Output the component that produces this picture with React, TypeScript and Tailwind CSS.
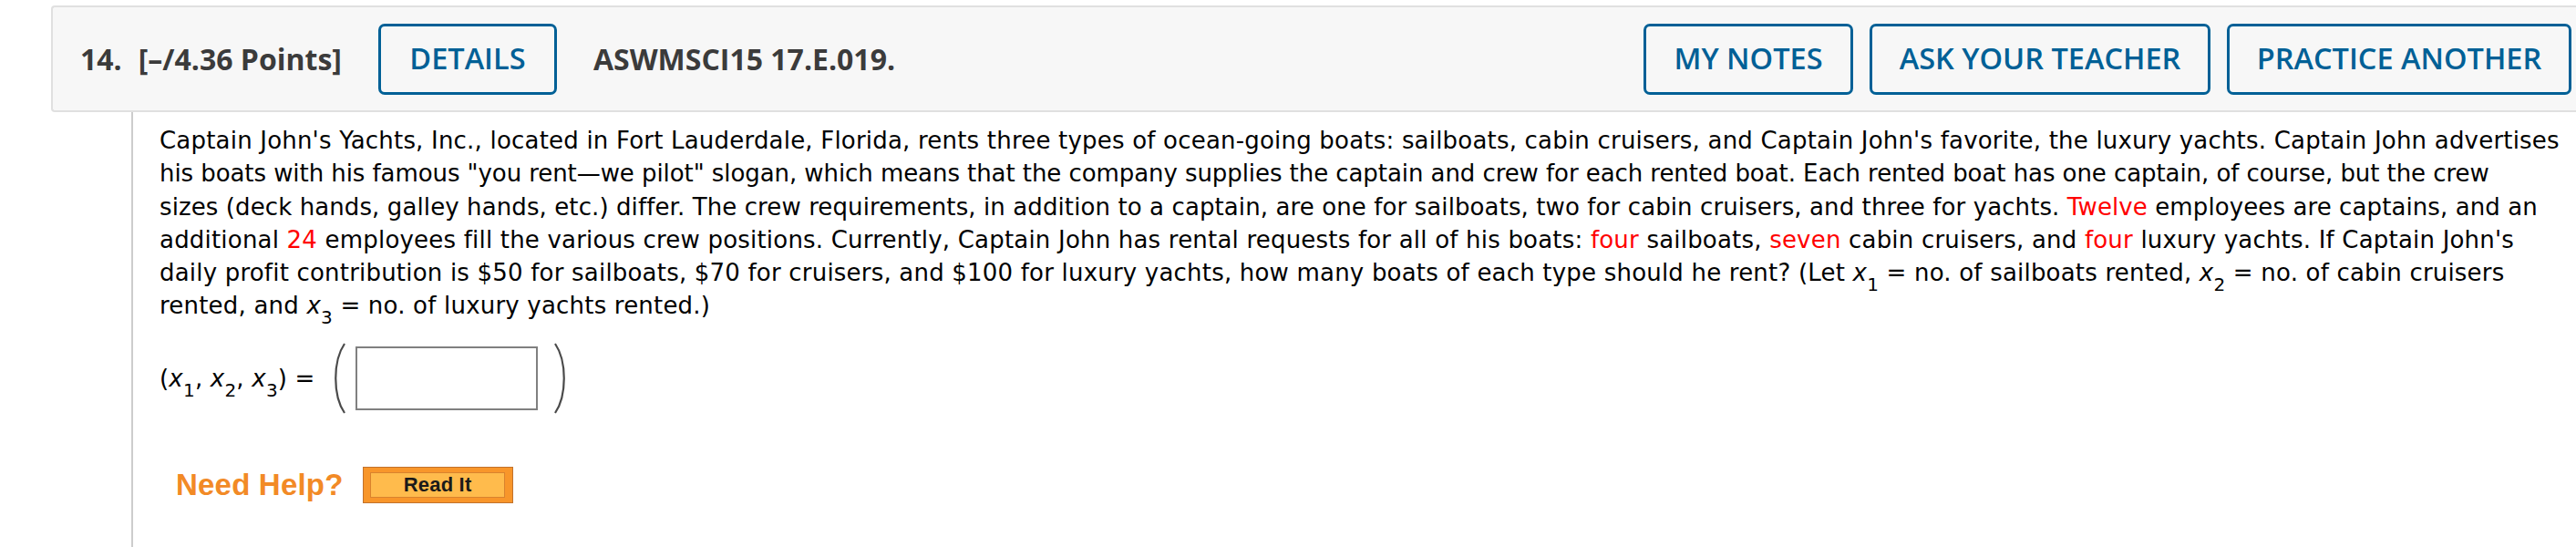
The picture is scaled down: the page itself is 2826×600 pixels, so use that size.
import React from "react";

const Sub = ({ n }: { n: string }) => (
  <span className="text-[20px] leading-[0] align-[-11px]">{n}</span>
);
const X = ({ n }: { n: string }) => (
  <>
    <i>x</i>
    <Sub n={n} />
  </>
);
const R = ({ children }: { children: React.ReactNode }) => (
  <span className="text-[#ff0000]">{children}</span>
);

function HeaderButton({ label, w }: { label: string; w: string }) {
  return (
    <div
      className={`${w} h-[78px] flex items-center justify-center border-[3px] border-[#006096] rounded-[7px] text-[#006096] font-semibold`}
    >
      {label}
    </div>
  );
}

export default function App() {
  return (
    <div className="w-[2826px] h-[600px] bg-white overflow-hidden">
      <div className="pl-[56px] pt-[6px]">
        <div className="h-[117px] flex items-center border-2 border-r-0 border-[#e0e0e0] rounded-l-[4px] bg-[#f7f7f7] pl-[30px] pr-[5px] font-['Open_Sans',sans-serif] text-[32.5px] text-[#3b3b3b]">
          <span className="font-bold text-[32px]">14.</span>
          <span className="ml-[18px] font-bold text-[32px]">[–/4.36 Points]</span>
          <div className="ml-[40px]">
            <HeaderButton label="DETAILS" w="w-[196px]" />
          </div>
          <span className="ml-[40px] font-bold text-[32px]">ASWMSCI15 17.E.019.</span>
          <div className="ml-auto flex gap-[18px]">
            <HeaderButton label="MY NOTES" w="w-[230px]" />
            <HeaderButton label="ASK YOUR TEACHER" w="w-[374px]" />
            <HeaderButton label="PRACTICE ANOTHER" w="w-[378px]" />
          </div>
        </div>
      </div>

      <div className="ml-[144px] border-l-2 border-[#cccccc] h-[477px] pl-[29px] pt-[13px] font-['DejaVu_Sans',Verdana,sans-serif] text-[26px] tracking-[0.2px] text-black">
        <div className="whitespace-nowrap leading-[36.3px]">
          Captain John's Yachts, Inc., located in Fort Lauderdale, Florida, rents three types of ocean-going boats: sailboats, cabin cruisers, and Captain John's favorite, the luxury yachts. Captain John advertises
        </div>
        <div className="whitespace-nowrap leading-[36.3px] tracking-[-0.07px]">
          his boats with his famous "you rent—we pilot" slogan, which means that the company supplies the captain and crew for each rented boat. Each rented boat has one captain, of course, but the crew
        </div>
        <div className="whitespace-nowrap leading-[36.3px] tracking-[0.1px]">
          sizes (deck hands, galley hands, etc.) differ. The crew requirements, in addition to a captain, are one for sailboats, two for cabin cruisers, and three for yachts. <R>Twelve</R> employees are captains, and an
        </div>
        <div className="whitespace-nowrap leading-[36.3px]">
          additional <R>24</R> employees fill the various crew positions. Currently, Captain John has rental requests for all of his boats: <R>four</R> sailboats, <R>seven</R> cabin cruisers, and <R>four</R> luxury yachts. If Captain John's
        </div>
        <div className="whitespace-nowrap leading-[36.3px]">
          daily profit contribution is $50 for sailboats, $70 for cruisers, and $100 for luxury yachts, how many boats of each type should he rent? (Let <X n="1" /> = no. of sailboats rented, <X n="2" /> = no. of cabin cruisers
        </div>
        <div className="whitespace-nowrap leading-[36.3px]">
          rented, and <X n="3" /> = no. of luxury yachts rented.)
        </div>

        <div className="mt-[23px] flex items-center h-[77px]">
          <span className="whitespace-nowrap leading-[36px]">
            (<X n="1" />, <X n="2" />, <X n="3" />) =
          </span>
          <svg className="ml-[16px]" width="18" height="78" viewBox="0 0 18 78">
            <path d="M16 1 C 3 20, 3 58, 16 77" fill="none" stroke="#4a4a4a" strokeWidth="2.2" />
          </svg>
          <div className="ml-[10px] w-[200px] h-[70px] border-2 border-[#808080] bg-white" />
          <svg className="ml-[17px]" width="18" height="78" viewBox="0 0 18 78">
            <path d="M2 1 C 15 20, 15 58, 2 77" fill="none" stroke="#4a4a4a" strokeWidth="2.2" />
          </svg>
        </div>

        <div className="mt-[58px] ml-[18px] flex items-center">
          <span className="font-['Liberation_Sans',Arial,sans-serif] font-bold text-[33px] text-[#f28a26] leading-none">
            Need Help?
          </span>
          <div className="ml-[21px] w-[165px] h-[40px] bg-[#f8962a] border border-[#c2722c] flex items-center justify-center">
            <div className="w-[148px] h-[28px] bg-[#ffbb4c] border border-[#d9832e] flex items-center justify-center font-['Liberation_Sans',Arial,sans-serif] font-bold text-[22px] text-[#1a1a1a] leading-none">
              Read It
            </div>
          </div>
        </div>
      </div>
    </div>
  );
}
